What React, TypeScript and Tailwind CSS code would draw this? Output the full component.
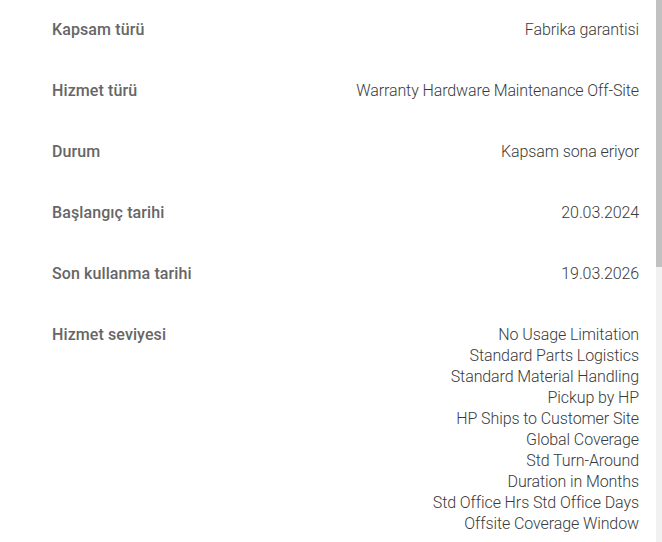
import React from "react";

interface coverageRow {
  label: string;
  values: string[];
}

const rows: coverageRow[] = [
  { label: "Kapsam türü", values: ["Fabrika garantisi"] },
  { label: "Hizmet türü", values: ["Warranty Hardware Maintenance Off-Site"] },
  { label: "Durum", values: ["Kapsam sona eriyor"] },
  { label: "Başlangıç tarihi", values: ["20.03.2024"] },
  { label: "Son kullanma tarihi", values: ["19.03.2026"] },
  {
    label: "Hizmet seviyesi",
    values: [
      "No Usage Limitation",
      "Standard Parts Logistics",
      "Standard Material Handling",
      "Pickup by HP",
      "HP Ships to Customer Site",
      "Global Coverage",
      "Std Turn-Around",
      "Duration in Months",
      "Std Office Hrs Std Office Days",
      "Offsite Coverage Window",
    ],
  },
];

function App() {
  return (
    <div
      className="flex h-[542px] w-full overflow-hidden bg-white"
      style={{ fontFamily: "Roboto, 'Noto Sans', sans-serif" }}
    >
      <div className="flex flex-1 flex-col gap-[40px] pl-[52px] pr-[17px] pt-[19px]">
        {rows.map((row, index) => (
          <div key={index} className="flex justify-between text-[16px] leading-[21px]">
            <span className="font-medium text-[#666666] tracking-[0.1px]">{row.label}</span>
            <div className="flex flex-col items-end text-right font-light text-[#3a3a3a] tracking-[-0.1px]">
              {row.values.map((v, i) => (
                <span key={i}>{v}</span>
              ))}
            </div>
          </div>
        ))}
      </div>
      {/* scrollbar */}
      <div className="flex w-[6px] flex-col bg-[#f1f1f1]">
        <div className="h-[267px] bg-[#c1c1c1]" />
      </div>
    </div>
  );
}

export default App;
